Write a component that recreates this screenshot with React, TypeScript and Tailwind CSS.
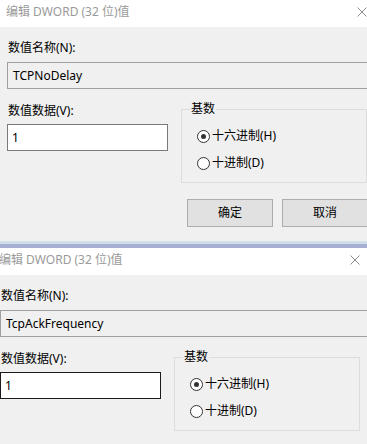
import React from 'react'

interface DialogProps {
  valueName: string
  focused?: boolean
  showButtons?: boolean
  className?: string
}

function CloseIcon() {
  return (
    <svg width="10" height="10" viewBox="0 0 10 10" className="block">
      <path d="M0.5 0.5 L9.5 9.5 M9.5 0.5 L0.5 9.5" stroke="#8c8c8c" strokeWidth="1" fill="none" />
    </svg>
  )
}

function Radio({ checked, label }: { checked?: boolean; label: string }) {
  return (
    <div className="flex items-center h-[16px]">
      <span className="w-[13px] h-[13px] rounded-full border border-[#333333] bg-white flex items-center justify-center">
        {checked && <span className="w-[5px] h-[5px] rounded-full bg-[#333333]" />}
      </span>
      <span className="ml-[2px] leading-[16px]">{label}</span>
    </div>
  )
}

function EditDwordDialog({ valueName, focused = false, showButtons = true, className = '' }: DialogProps) {
  return (
    <div className={`w-[376px] shrink-0 ${className}`}>
      {/* Title bar */}
      <div className="h-[27px] bg-white flex items-center justify-between pl-[6px] pr-[9px] pb-[3px]">
        <span className="text-[#9a9a9a] leading-[16px]">编辑 DWORD (32 位)值</span>
        <CloseIcon />
      </div>

      {/* Body */}
      <div className="h-[213px] bg-[#f0f0f0] pl-[7px] pt-[13px]">
        <div className="pl-[1px] leading-[16px] h-[16px]">数值名称(N):</div>
        <div className="mt-[6px] h-[27px] border border-[#a0a0a0] bg-[#f0f0f0] flex items-center pl-[5px]">
          {valueName}
        </div>

        <div className="mt-[14px] flex">
          <div className="w-[161px]">
            <div className="pl-[1px] leading-[16px] h-[16px]">数值数据(V):</div>
            <div
              className={`mt-[5px] h-[27px] bg-white flex items-center pl-[4px] border ${
                focused ? 'border-[#1a1a1a]' : 'border-[#7a7a7a]'
              }`}
            >
              1
            </div>
          </div>

          <fieldset className="ml-[13px] w-[186px] h-[80px] border border-[#dcdcdc] pl-[15px]">
            <legend className="ml-[-7px] px-[1px] leading-[12px]">基数</legend>
            <div className="mt-[13px] flex flex-col gap-[11px]">
              <Radio checked label="十六进制(H)" />
              <Radio label="十进制(D)" />
            </div>
          </fieldset>
        </div>

        {showButtons && (
          <div className="mt-[16px] ml-[180px] flex gap-[9px]">
            <button className="w-[86px] h-[28px] bg-[#e1e1e1] border border-[#adadad] leading-[16px]">确定</button>
            <button className="w-[86px] h-[28px] bg-[#e1e1e1] border border-[#adadad] leading-[16px]">取消</button>
          </div>
        )}
      </div>
    </div>
  )
}

export default function App() {
  return (
    <div className="w-[367px] h-[444px] overflow-hidden bg-[#f0f0f0] text-[12px] text-black font-['Noto_Sans','Noto_Sans_CJK_SC',sans-serif]">
      <EditDwordDialog valueName="TCPNoDelay" />

      {/* Desktop strip between the two screenshots */}
      <div className="h-[8px] flex flex-col">
        <div className="h-[1px] bg-[#eef2ee]" />
        <div className="h-[3px] bg-[#d2deea]" />
        <div className="h-[4px] bg-[#a7afd4]" />
      </div>

      <EditDwordDialog valueName="TcpAckFrequency" focused showButtons={false} className="ml-[-7px]" />
    </div>
  )
}
